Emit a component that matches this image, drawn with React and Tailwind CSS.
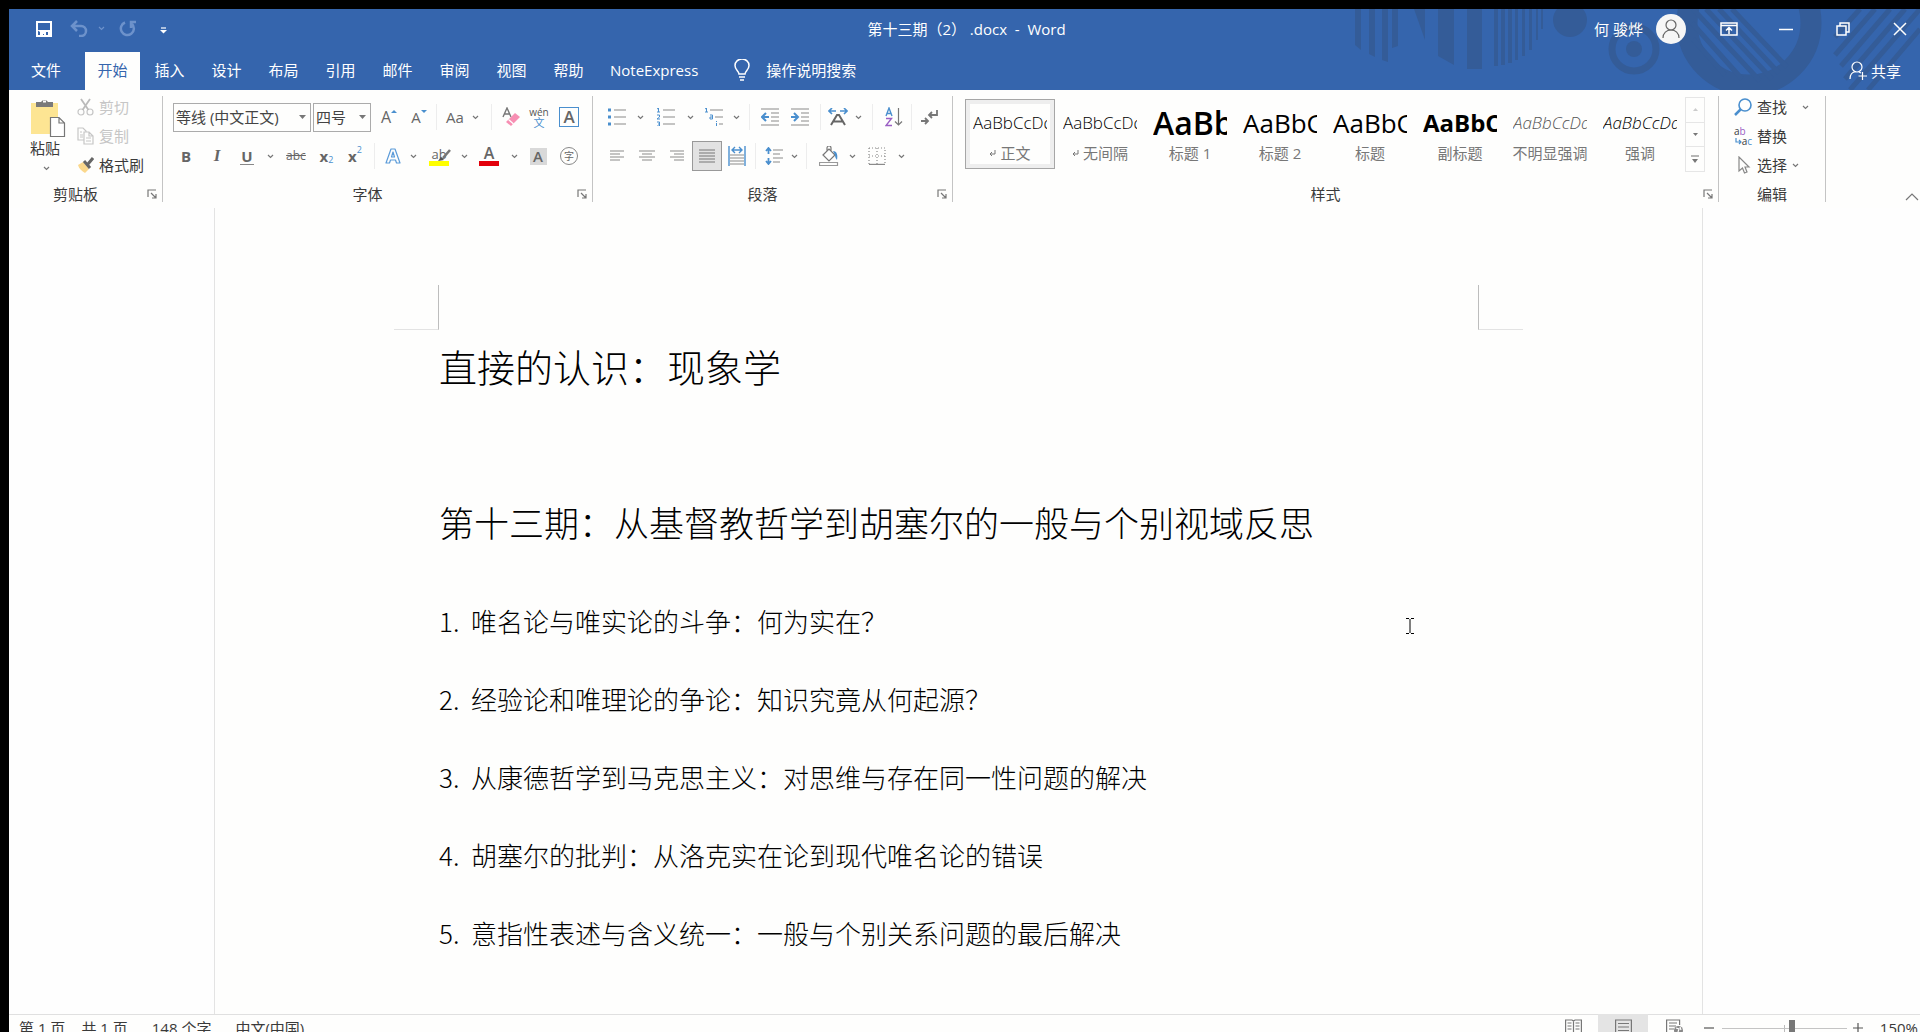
import { useState } from "react";
import clsx from "clsx";

const tabs = ["开始", "插入", "设计", "布局", "引用", "邮件", "审阅", "视图", "帮助"];

const styles = [
  { name: "正文", mark: true, sample: "AaBbCcDd", className: "text-[17px] font-light" },
  { name: "无间隔", mark: true, sample: "AaBbCcDd", className: "text-[17px] font-light" },
  { name: "标题 1", sample: "AaBbC", className: "text-[32px] font-semibold" },
  { name: "标题 2", sample: "AaBbCc", className: "text-[26px]" },
  { name: "标题", sample: "AaBbCc", className: "text-[26px]" },
  { name: "副标题", sample: "AaBbCc", className: "text-[24px] font-bold" },
  { name: "不明显强调", sample: "AaBbCcDd", className: "text-[17px] font-light italic text-[#555]" },
  { name: "强调", sample: "AaBbCcDd", className: "text-[17px] font-light italic" },
];

const outline = [
  "唯名论与唯实论的斗争：何为实在？",
  "经验论和唯理论的争论：知识究竟从何起源？",
  "从康德哲学到马克思主义：对思维与存在同一性问题的解决",
  "胡塞尔的批判：从洛克实在论到现代唯名论的错误",
  "意指性表述与含义统一：一般与个别关系问题的最后解决",
];

const Icon = ({ w = 18, h = 18, children, className }) => (
  <svg
    width={w}
    height={h}
    viewBox={`0 0 ${w} ${h}`}
    fill="none"
    stroke="#8a8a8a"
    strokeWidth="1.2"
    className={clsx("shrink-0", className)}
  >
    {children}
  </svg>
);

const Chevron = () => (
  <Icon w={7} h={5}>
    <path d="M1 1l2.5 2.5L6 1" stroke="#777" />
  </Icon>
);

const Tool = ({ label, className, children }) => (
  <button
    type="button"
    aria-label={label}
    className={clsx("flex h-[30px] shrink-0 items-center justify-center", className)}
  >
    {children}
  </button>
);

const Drop = ({ label, className }) => (
  <Tool label={label} className={className}>
    <Chevron />
  </Tool>
);

const Sep = ({ className }) => (
  <div className={clsx("flex h-[26px] shrink-0 justify-center", className)}>
    <div className="w-px bg-[#ededed]" />
  </div>
);

const Group = ({ title, launcher = true, className, children }) => (
  <section className={clsx("flex h-[106px] flex-col border-r border-[#c4c4c4]", className)}>
    <div className="h-[90px]">{children}</div>
    <div className="flex h-4 items-center leading-4">
      <span className="flex-1 text-center">{title}</span>
      {launcher && (
        <button type="button" aria-label={`${title}设置`} className="flex w-5 justify-center">
          <Icon w={10} h={10}>
            <path d="M1 8V1h8M4 4l4.5 4.5M9 5v4H5" stroke="#777" />
          </Icon>
        </button>
      )}
    </div>
  </section>
);

const Row = ({ children, className }) => (
  <div className={clsx("flex h-[34px] items-center", className)}>{children}</div>
);

const HeaderArt = () => (
  <svg
    width="620"
    height="81"
    viewBox="0 0 620 81"
    className="absolute top-0 right-0"
    fill="#345c98"
    stroke="#345c98"
    strokeWidth="0"
  >
    <path d="M55 0h6v41l-6-5zM69 0h6v48l-6-3zM82 0h6v53l-6-2zM92 0h6v37l-6 2zM114 0h11v31zM138 0h16v56l-16-9zM167 0h15v60h-15z" />
    <path d="M194 0h4v57h-4zM201 0h4v56h-4zM208 0h4v54h-4zM215 0h3v51h-3zM222 0h3v47h-3zM229 0h3v41h-3zM236 0h2v31h-2zM241 0h2v20h-2z" />
    <circle cx="270" cy="11" r="17" />
    <circle cx="334" cy="40" r="8" />
    <circle cx="334" cy="40" r="22" fill="none" strokeWidth="7" />
    <circle cx="449" cy="14" r="62" fill="none" strokeWidth="21" />
    <path
      d="M393 0l67 72M406 0l66 70M419 0l60 64M432 0l55 58M392 14l50 56M393 30l32 36"
      fill="none"
      strokeWidth="5"
    />
    <path
      d="M575 0l-40 46M590 0l-49 57M605 0l-60 70M620 0l-70 81M620 20l-52 61M560 0l-25 28"
      fill="none"
      strokeWidth="5"
    />
  </svg>
);

const TitleBar = () => (
  <div className="relative grid h-[39px] grid-cols-[1fr_auto_1fr] items-center">
    <div className="flex items-center pl-[18px]">
      <Tool label="保存" className="w-[34px]">
        <Icon w={16} h={16}>
          <path d="M1 1h14v14H1z" stroke="#fff" strokeWidth="2" />
          <path d="M1 9h14v6h-3v-4h-2v4H8v-2H7v2H4v-4z" fill="#fff" stroke="none" />
        </Icon>
      </Tool>
      <Tool label="撤消" className="w-9">
        <Icon w={18} h={17}>
          <path d="M7 1L2 6l5 5M2 6h9a5 5 0 010 10H9" stroke="#6d92cb" strokeWidth="2.5" />
        </Icon>
      </Tool>
      <Tool label="撤消列表" className="w-2">
        <Icon w={7} h={5}>
          <path d="M1 1l2.5 2.5L6 1" stroke="#6d92cb" />
        </Icon>
      </Tool>
      <Tool label="重复" className="w-[46px]">
        <Icon w={18} h={17}>
          <path d="M6 2.5A6.5 6.5 0 1013 4M17 2h-5v6" stroke="#6d92cb" strokeWidth="2.5" />
        </Icon>
      </Tool>
      <Tool label="自定义快速访问工具栏" className="w-6 pt-1">
        <Icon w={7} h={7}>
          <path d="M1 1h5" stroke="#fff" />
          <path d="M0 3h7L3.500 6.500z" fill="#fff" stroke="none" />
        </Icon>
      </Tool>
    </div>
    <h1 className="pl-1 whitespace-pre">第十三期（2） .docx  -  Word</h1>
    <div className="flex items-center justify-end">
      <span className="mr-[13px]">何 骏烨</span>
      <button
        type="button"
        aria-label="帐户"
        className="mr-[23px] flex size-[30px] items-center justify-center rounded-full bg-[#f6f6f6]"
      >
        <Icon w={18} h={20}>
          <circle cx="9" cy="6" r="5" stroke="#666" />
          <path d="M1 19c0-5 3.500-8 8-8s8 3 8 8" stroke="#666" />
        </Icon>
      </button>
      <div className="flex gap-[17px]">
        <Tool label="功能区显示选项" className="w-10">
          <Icon w={18} h={14}>
            <path d="M1 1h16v12H1zM1 3.500h16M9 12V6M6 8.500L9 5.500l3 3" stroke="#fff" strokeWidth="1.5" />
          </Icon>
        </Tool>
        <Tool label="最小化" className="w-10">
          <Icon w={14} h={14}>
            <path d="M0 7.500h14" stroke="#fff" strokeWidth="1.5" />
          </Icon>
        </Tool>
        <Tool label="向下还原" className="w-10">
          <Icon w={14} h={14}>
            <path d="M1 4h9v9H1zM4 4V1h9v9h-3" stroke="#fff" strokeWidth="1.5" />
          </Icon>
        </Tool>
        <Tool label="关闭" className="w-10">
          <Icon w={14} h={14}>
            <path d="M1 1l12 12M13 1L1 13" stroke="#fff" strokeWidth="1.5" />
          </Icon>
        </Tool>
      </div>
    </div>
  </div>
);

const TabBar = () => {
  const [active, setActive] = useState("开始");
  return (
    <nav className="relative mt-1 flex h-[38px] items-center gap-0.5">
      <button type="button" className="h-full w-[74px] pb-0.5">
        文件
      </button>
      {tabs.map((tab) => (
        <button
          type="button"
          key={tab}
          onClick={() => setActive(tab)}
          className={clsx("h-full w-[55px] pb-0.5", tab === active && "bg-[#fefefd] text-[#3565ad]")}
        >
          {tab}
        </button>
      ))}
      <button type="button" className="h-full px-3 pb-0.5">
        NoteExpress
      </button>
      <button type="button" className="ml-[22px] flex h-full items-center gap-4 pb-0.5">
        <Icon w={16} h={22}>
          <path
            d="M5 15c0-3-4-4-4-8.500a7 6.500 0 0114 0C15 11 11 12 11 15zM5 18h6M6 21h4"
            stroke="#fff"
            strokeWidth="1.5"
          />
        </Icon>
        操作说明搜索
      </button>
      <button type="button" className="mr-[19px] ml-auto flex h-full items-center gap-1">
        <Icon w={18} h={20}>
          <circle cx="8" cy="6" r="5" stroke="#fff" />
          <path d="M1 18c0-4 2-7 6-7.500M10 11l2 1M13.500 11v8M9.500 15H18" stroke="#fff" />
        </Icon>
        共享
      </button>
    </nav>
  );
};

const ClipboardGroup = () => (
  <Group title="剪贴板" className="w-[154px]">
    <div className="flex">
      <button type="button" className="flex w-[68px] flex-col items-start pt-0.5 pl-[21px]">
        <Icon w={36} h={40}>
          <path d="M1 5h27v31H1z" fill="#fde593" stroke="none" />
          <path d="M6 4h5a4 4 0 017 0h5v5H6z" fill="#7a7a7a" stroke="none" />
          <path d="M13 3.500h3" stroke="#fff" strokeWidth="2" />
          <path d="M20.500 19.500h8.500l5.500 5.500v13.500h-14zM29 19.500V25h5.500" fill="#fff" stroke="#777" />
        </Icon>
        <span className="leading-5">粘贴</span>
        <span className="pt-2 pl-[13px]">
          <Chevron />
        </span>
      </button>
      <div className="flex flex-col gap-[5px]">
        <button type="button" disabled className="flex h-6 items-center gap-[5px] pb-0.5 text-[#c6c6c6]">
          <Icon w={17} h={18}>
            <circle cx="4" cy="14" r="3" stroke="#c6c6c6" />
            <circle cx="13" cy="14" r="3" stroke="#c6c6c6" />
            <path d="M4 1l7.500 11M13 1L5.500 12" stroke="#bbb" strokeWidth="1.8" />
          </Icon>
          剪切
        </button>
        <button type="button" disabled className="flex h-6 items-center gap-[5px] pb-0.5 text-[#c6c6c6]">
          <Icon w={17} h={18}>
            <path
              d="M7 13H1V1h5l3 3v1M7 5h5l4 4v8H7zM12 5v4h4M3 5h2M3 8h3M3 10h3M9 11h5M9 14h5"
              stroke="#c6c6c6"
            />
          </Icon>
          复制
        </button>
        <button type="button" className="flex h-6 items-center gap-[5px] pb-0.5">
          <Icon w={17} h={18}>
            <path d="M1 9l5-3 6 7-4 4c-3-2-6-4-7-8z" fill="#fbd88c" stroke="none" />
            <path d="M7 5l6 7M11 8l5-6" stroke="#666" strokeWidth="3" />
          </Icon>
          格式刷
        </button>
      </div>
    </div>
  </Group>
);

const selectClass =
  "h-[29px] w-full appearance-none border border-[#ababab] bg-transparent pl-0.5 text-[15px] leading-5";

const Picker = ({ id, label, value, className }) => (
  <div className={clsx("relative shrink-0", className)}>
    <select id={id} aria-label={label} className={selectClass}>
      <option>{value}</option>
    </select>
    <Icon w={7} h={4} className="pointer-events-none absolute top-3 right-[5px]">
      <path d="M0 0h7L3.500 4z" fill="#777" stroke="none" />
    </Icon>
  </div>
);

const FontGroup = () => (
  <Group title="字体" className="w-[430px]">
    <div className="flex flex-col gap-[5px] pt-1 text-[#666]">
      <Row className="pl-[10px]">
        <Picker id="font" label="字体" value="等线 (中文正文)" className="mr-0.5 w-[138px] text-[#444]" />
        <Picker id="size" label="字号" value="四号" className="w-[58px] text-[#444]" />
        <Tool label="增大字号" className="w-9">
          <span className="text-[16px]">A</span>
          <Icon w={6} h={16}>
            <path d="M0 4l3-3 3 3z" fill="#4a8fce" stroke="none" />
          </Icon>
        </Tool>
        <Tool label="减小字号" className="w-6">
          <span className="text-[15px]">A</span>
          <Icon w={6} h={16}>
            <path d="M0 1h6L3 4z" fill="#4a8fce" stroke="none" />
          </Icon>
        </Tool>
        <Sep className="w-2.5" />
        <Tool label="更改大小写" className="w-7">
          Aa
        </Tool>
        <Drop label="大小写选项" className="w-3" />
        <Sep className="w-5" />
        <Tool label="清除所有格式" className="w-5">
          <Icon w={19} h={20}>
            <path d="M1 10l4-9 4 9M2.500 7h5" stroke="#777" strokeWidth="1.4" />
            <path d="M4 15l9-9 5 4-9 9z" fill="#f78fb3" stroke="none" />
            <path d="M6.500 12.500l5 4.500" stroke="#fff" />
          </Icon>
        </Tool>
        <Tool label="拼音指南" className="w-9 flex-col">
          <span className="text-[10px] leading-[10px] text-[#555]">wén</span>
          <span className="text-[11px] leading-[11px] text-[#4a8fce]">文</span>
        </Tool>
        <Tool label="字符边框" className="w-6">
          <span className="flex size-5 items-center justify-center border border-[#4a8fce] text-[17px] font-semibold">
            A
          </span>
        </Tool>
      </Row>
      <Row className="pl-2">
        <Tool label="加粗" className="w-[30px] font-bold">
          B
        </Tool>
        <Tool label="倾斜" className="w-8 font-['Liberation_Serif'] text-[17px] font-bold italic">
          I
        </Tool>
        <Tool label="下划线" className="w-7">
          <span className="border-b border-[#888] px-px leading-4 font-bold">U</span>
        </Tool>
        <Drop label="下划线选项" className="w-[18px]" />
        <Tool label="删除线" className="w-[34px] text-[12px] line-through">
          abc
        </Tool>
        <Tool label="下标" className="w-[27px]">
          <span className="font-bold">x</span>
          <span className="pt-2 text-[9px] text-[#4a8fce]">2</span>
        </Tool>
        <Tool label="上标" className="w-[30px]">
          <span className="font-bold">x</span>
          <span className="pb-3 text-[9px] text-[#4a8fce]">2</span>
        </Tool>
        <Sep className="w-2" />
        <Tool label="文本效果" className="w-[30px]">
          <Icon w={16} h={18}>
            <path
              d="M1 16L6 2h4l5 14h-3.500l-1-3H5.500l-1 3zM6.500 10h3L8 5z"
              stroke="#5b9bd9"
              strokeLinejoin="round"
            />
          </Icon>
        </Tool>
        <Drop label="文本效果选项" className="w-2.5" />
        <Tool label="突出显示" className="w-[42px] flex-col">
          <span className="relative text-[13px] leading-[14px]">
            ab
            <Icon w={14} h={14} className="absolute top-0.5 left-1.5">
              <path d="M13 1L6 9" stroke="#777" strokeWidth="2.5" />
              <path d="M1 12l3-4 3 3z" fill="#555" stroke="none" />
            </Icon>
          </span>
          <span className="h-[5px] w-5 bg-[#ffff00]" />
        </Tool>
        <Drop label="突出显示颜色" className="w-2" />
        <Tool label="字体颜色" className="w-[42px] flex-col">
          <span className="text-[16px] leading-[15px] font-semibold">A</span>
          <span className="h-[5px] w-5 bg-[#e3000b]" />
        </Tool>
        <Drop label="字体颜色选项" className="w-2" />
        <Tool label="字符底纹" className="w-10">
          <span className="flex h-[17px] w-[17px] items-center justify-center bg-[#d9d9d9] font-semibold">A</span>
        </Tool>
        <Tool label="带圈字符" className="w-[22px]">
          <span className="flex size-[18px] items-center justify-center rounded-full border border-[#888] text-[10px]">
            字
          </span>
        </Tool>
      </Row>
    </div>
  </Group>
);

const ParagraphGroup = () => (
  <Group title="段落" className="w-[360px]">
    <div className="flex flex-col gap-[5px] pt-1 pl-[9px]">
      <Row>
        <Tool label="项目符号" className="w-[30px]">
          <Icon>
            <path d="M6 2h12M6 9h12M6 16h12" />
            <path d="M0 2h3M0 9h3M0 16h3" stroke="#4a8fce" strokeWidth="3" />
          </Icon>
        </Tool>
        <Drop label="项目符号库" className="w-4" />
        <Tool label="编号" className="w-9">
          <Icon>
            <path d="M6 2h12M6 9h12M6 16h12" />
            <path
              d="M0 1l1.500-1v4M0 4h3M0 7h2.500v2L0 11h3M0 14h2.500v4H0M1 16h1.500"
              stroke="#4a8fce"
              strokeWidth="1"
            />
          </Icon>
        </Tool>
        <Drop label="编号库" className="w-3" />
        <Tool label="多级列表" className="w-9">
          <Icon>
            <path d="M5 2h13M10 9h8M14 16h4" />
            <path
              d="M0 1l1.500-1v4M0 4h3M5 7h2.500v4H5V9h2.500M11.500 13v1M11.500 15v3"
              stroke="#4a8fce"
              strokeWidth="1"
            />
          </Icon>
        </Tool>
        <Drop label="多级列表库" className="w-2" />
        <Sep className="w-[18px]" />
        <Tool label="减少缩进量" className="w-6">
          <Icon>
            <path d="M0 1h18M10 5h8M10 9h8M10 13h8M0 17h18" />
            <path d="M8 9H2M5 5L1 9l4 4" stroke="#4a8fce" strokeWidth="2" />
          </Icon>
        </Tool>
        <Tool label="增加缩进量" className="w-9">
          <Icon>
            <path d="M0 1h18M10 5h8M10 9h8M10 13h8M0 17h18" />
            <path d="M0 9h6M3 5l4 4-4 4" stroke="#4a8fce" strokeWidth="2" />
          </Icon>
        </Tool>
        <Sep className="w-1" />
        <Tool label="中文版式" className="w-8">
          <Icon w={20} h={18}>
            <path d="M3 17l6-10h2l6 10M5.500 13.500h9" stroke="#666" strokeWidth="2" />
            <path d="M8 3H1M4 0L1 3l3 3M12 3h7M16 0l3 3-3 3" stroke="#4a8fce" strokeWidth="1.600" />
          </Icon>
        </Tool>
        <Drop label="中文版式选项" className="w-2" />
        <Sep className="w-5" />
        <Tool label="排序" className="w-6">
          <Icon w={18} h={20}>
            <path d="M1 9l3-8 3 8M2 6.500h4" stroke="#4a8fce" strokeWidth="1.400" />
            <path d="M1 11.500h5.500L1 18.500h6" stroke="#9b5fc4" strokeWidth="1.400" />
            <path d="M13.500 1v17M10 14.500l3.500 3.500 3.500-3.500" stroke="#777" />
          </Icon>
        </Tool>
        <Sep className="w-2.5" />
        <Tool label="显示编辑标记" className="w-[26px]">
          <Icon w={17} h={16}>
            <path d="M16 1v5H8M11 3L8 6l3 3M0 12h7M4 9l3 3-3 3" stroke="#777" strokeWidth="1.800" />
          </Icon>
        </Tool>
      </Row>
      <Row>
        <Tool label="左对齐" className="w-[30px]">
          <Icon w={14} h={12}>
            <path d="M0 1h14M0 4h10M0 7h14M0 10h10" />
          </Icon>
        </Tool>
        <Tool label="居中" className="w-[30px]">
          <Icon w={16} h={12}>
            <path d="M0 1h16M3 4h10M0 7h16M3 10h10" />
          </Icon>
        </Tool>
        <Tool label="右对齐" className="w-[30px]">
          <Icon w={14} h={12}>
            <path d="M0 1h14M4 4h10M0 7h14M4 10h10" />
          </Icon>
        </Tool>
        <Tool label="两端对齐" className="w-[30px] border border-[#999] bg-[#e2e2e2]">
          <Icon w={16} h={14}>
            <path d="M0 1h16M0 4h16M0 7h16M0 10h16M0 13h16" stroke="#777" />
          </Icon>
        </Tool>
        <Tool label="分散对齐" className="w-[30px]">
          <Icon w={18} h={20}>
            <path d="M2 9h14M2 12h14M2 15h14M2 18h14" />
            <path d="M1 0v20M17 0v20M4 4h10M7 1L4 4l3 3M11 1l3 3-3 3" stroke="#4a8fce" strokeWidth="1.400" />
          </Icon>
        </Tool>
        <Sep className="w-1.5" />
        <Tool label="行和段落间距" className="w-8">
          <Icon>
            <path d="M8 3h10M8 7h7M8 11h10M8 15h7" />
            <path d="M3.500 1v6M1 4l2.500-3L6 4M3.500 11v6M1 14l2.500 3L6 14" stroke="#4a8fce" strokeWidth="1.800" />
          </Icon>
        </Tool>
        <Drop label="间距选项" className="w-2" />
        <Sep className="w-4" />
        <Tool label="底纹" className="w-[30px]">
          <Icon w={20} h={20}>
            <path d="M4 9l6-6 6 6-6 6zM8 5V2a2 2 0 014 0v4" stroke="#777" />
            <path d="M14 5c4 0 5 4 4 9-1-1-2-3-2-5z" fill="#4a8fce" stroke="none" />
            <path d="M.5 16.500h18v3H.5z" stroke="#999" />
          </Icon>
        </Tool>
        <Drop label="底纹颜色" className="w-4" />
        <Tool label="边框" className="w-[34px]">
          <Icon>
            <path d="M1 1h16v16M1 1v16M9 1v16M1 9h16" strokeDasharray="1 2" />
            <path d="M1 17.400h16" />
          </Icon>
        </Tool>
        <Drop label="边框选项" className="w-[14px]" />
      </Row>
    </div>
  </Group>
);

const StyleGroup = () => {
  const [selected, setSelected] = useState("正文");
  return (
    <Group title="样式" className="min-w-[766px] flex-1">
      <div className="flex pl-3">
        {styles.map((style) => (
          <button
            type="button"
            key={style.name}
            onClick={() => setSelected(style.name)}
            className={clsx(
              "mt-[3px] flex h-[70px] w-[90px] flex-col items-center border",
              style.name === selected
                ? "border-[#a6a6a6] shadow-[inset_0_0_0_4px_#eeeeee]"
                : "border-transparent"
            )}
          >
            <span className="flex h-[46px] w-[74px] items-center overflow-hidden text-black">
              <span className={style.className}>{style.sample}</span>
            </span>
            <span className="flex items-center gap-1 leading-[15px] whitespace-nowrap text-[#777]">
              {style.mark && (
                <Icon w={7} h={7}>
                  <path d="M6 0v4H1M3 2L1 4l2 2" stroke="#777" strokeWidth="1" />
                </Icon>
              )}
              {style.name}
            </span>
          </button>
        ))}
        <div className="mt-px flex h-[75px] w-5 flex-col divide-y divide-[#e6e6e6] border border-[#e6e6e6]">
          <button type="button" aria-label="上一行" className="flex flex-1 items-center justify-center">
            <Icon w={5} h={3}>
              <path d="M0 3h5L2.500 0z" fill="#ccc" stroke="none" />
            </Icon>
          </button>
          <button type="button" aria-label="下一行" className="flex flex-1 items-center justify-center">
            <Icon w={5} h={3}>
              <path d="M0 0h5L2.500 3z" fill="#777" stroke="none" />
            </Icon>
          </button>
          <button type="button" aria-label="其他样式" className="flex flex-1 items-center justify-center">
            <Icon w={8} h={8}>
              <path d="M0 1h8" stroke="#888" />
              <path d="M1 4h6L4 8z" fill="#777" stroke="none" />
            </Icon>
          </button>
        </div>
      </div>
    </Group>
  );
};

const EditGroup = () => (
  <Group title="编辑" launcher={false} className="w-[107px]">
    <div className="flex flex-col items-start gap-[5px] pl-[15px]">
      <button type="button" className="flex h-6 items-center gap-[5px] pb-0.5">
        <Icon w={18} h={18}>
          <circle cx="11" cy="7" r="6" stroke="#4a8fce" strokeWidth="1.600" />
          <path d="M7 11l-6 6" stroke="#4a8fce" strokeWidth="2.500" />
        </Icon>
        查找
        <span className="pl-2.5">
          <Chevron />
        </span>
      </button>
      <button type="button" className="flex h-6 items-center gap-[5px] pb-0.5">
        <span className="flex w-[18px] flex-col text-[10px] leading-[10px]" aria-hidden="true">
          <span className="flex">
            a<span className="text-[#9b5fc4]">b</span>
          </span>
          <span className="flex items-center justify-end">
            <Icon w={7} h={7}>
              <path d="M1 0v4h5M4 2l2 2-2 2" stroke="#4a8fce" />
            </Icon>
            a<span className="text-[#4a8fce]">c</span>
          </span>
        </span>
        替换
      </button>
      <button type="button" className="flex h-6 items-center gap-[5px] pb-0.5">
        <Icon w={18} h={18}>
          <path d="M5 1v14l3.500-3 2 5 2.500-1-2-5h4z" stroke="#888" />
        </Icon>
        选择
        <Chevron />
      </button>
    </div>
  </Group>
);

const Ribbon = () => (
  <div className="flex h-[118px] shrink-0 items-start bg-[#fefefd] pt-1.5 text-[#3a3a3a]">
    <ClipboardGroup />
    <FontGroup />
    <ParagraphGroup />
    <StyleGroup />
    <EditGroup />
    <button
      type="button"
      aria-label="折叠功能区"
      className="flex h-[106px] w-[94px] items-end justify-end pr-px"
    >
      <Icon w={14} h={10}>
        <path d="M1 8l6-6 6 6" stroke="#777" />
      </Icon>
    </button>
  </div>
);

const Document = () => (
  <main className="min-h-0 flex-1 overflow-hidden bg-[#fefefe] pr-3">
    <article className="relative mx-auto h-full max-w-[1489px] border-x border-[#e3e3e3] bg-[#fefefd] font-['Noto_Sans_CJK_SC','Open_Sans',sans-serif] font-light text-black">
      <div className="flex justify-between px-[179px] pt-[77px]">
        <div className="size-[45px] border-r border-b border-r-[#bdbdbd] border-b-[#e3e3e3]" />
        <div className="size-[45px] border-b border-l border-b-[#e3e3e3] border-l-[#bdbdbd]" />
      </div>
      <div className="px-[224px]">
        <h2 className="text-[38px] leading-[72px]">直接的认识：现象学</h2>
        <h2 className="mt-[84px] text-[35px] leading-[72px]">
          第十三期：从基督教哲学到胡塞尔的一般与个别视域反思
        </h2>
        <ol className="mt-6 text-[26px] leading-[78px]">
          {outline.map((item, i) => (
            <li key={item} className="flex">
              <span className="w-8 shrink-0">{i + 1}.</span>
              {item}
            </li>
          ))}
        </ol>
      </div>
      {/* text cursor */}
      <Icon w={8} h={18} className="absolute top-[409px] left-[1191px]">
        <path d="M0 1.500h3M5 1.500h3M4 2v14M0 16.500h3M5 16.500h3" stroke="#000" strokeWidth="1" />
      </Icon>
    </article>
  </main>
);

const StatusBar = () => (
  <footer className="h-[18px] shrink-0 border-t border-[#e0e0e0] bg-[#fefefd] text-[#3a3a3a]">
    <div className="flex h-[26px] items-center pl-[10px]">
      <span>第 1 页</span>
      <span className="ml-4">共 1 页</span>
      <span className="ml-6">148 个字</span>
      <span className="ml-6">中文(中国)</span>
      <div className="ml-auto flex h-[30px] items-center">
        <Tool label="阅读视图" className="w-[50px]">
          <Icon w={17} h={18}>
            <path
              d="M.6 1H7l1.500 1L10 1h6.400v14H.6zM8.500 2v14M2.500 4h4M2.500 7h4M2.500 10h4M10.500 4h4M10.500 7h4M10.500 10h4"
              stroke="#777"
            />
          </Icon>
        </Tool>
        <Tool label="页面视图" className="w-[50px] bg-[#e4e4e4]">
          <Icon w={17} h={18}>
            <path d="M.6 1h15.800v16H.6zM3 4.500h11M3 8h11M3 11.500h11" stroke="#777" />
          </Icon>
        </Tool>
        <Tool label="Web 版式视图" className="w-[52px]">
          <Icon w={17} h={18}>
            <path d="M7 15H.6V1h13v5M3 4h8M3 7h7M3 10h5" stroke="#777" />
            <circle cx="12.500" cy="11.500" r="4.500" fill="#888" stroke="none" />
            <path d="M10 9l3 1-1 3M14 8l1 3" stroke="#fff" />
          </Icon>
        </Tool>
        <Tool label="缩小" className="ml-0.5 w-[14px]">
          <Icon w={10} h={10}>
            <path d="M0 5h10" stroke="#555" />
          </Icon>
        </Tool>
        <div className="relative mx-1.5 flex h-full w-[125px] items-center">
          <div className="absolute top-3 left-[62px] h-[7px] w-px bg-[#bbb]" />
          <input
            id="zoom"
            aria-label="显示比例"
            type="range"
            min="0"
            max="100"
            defaultValue="56"
            className="relative h-4 w-full appearance-none bg-[linear-gradient(#c4c4c4,#c4c4c4)] bg-[length:100%_1px] bg-center bg-no-repeat [&::-webkit-slider-thumb]:h-4 [&::-webkit-slider-thumb]:w-1.5 [&::-webkit-slider-thumb]:appearance-none [&::-webkit-slider-thumb]:bg-[#777]"
          />
        </div>
        <Tool label="放大" className="w-[10px]">
          <Icon w={10} h={12}>
            <path d="M0 6h10M5 1v10" stroke="#555" />
          </Icon>
        </Tool>
        <span className="w-[57px] pr-0.5 text-right">150%</span>
      </div>
    </div>
  </footer>
);

export default function App() {
  return (
    <div className="flex h-screen flex-col overflow-hidden bg-black pt-[9px] pl-[9px] font-['Open_Sans','Noto_Sans_CJK_SC',sans-serif] text-[15px] leading-5">
      <header className="relative shrink-0 bg-[#3565ad] text-white">
        <HeaderArt />
        <TitleBar />
        <TabBar />
      </header>
      <Ribbon />
      <Document />
      <StatusBar />
    </div>
  );
}
